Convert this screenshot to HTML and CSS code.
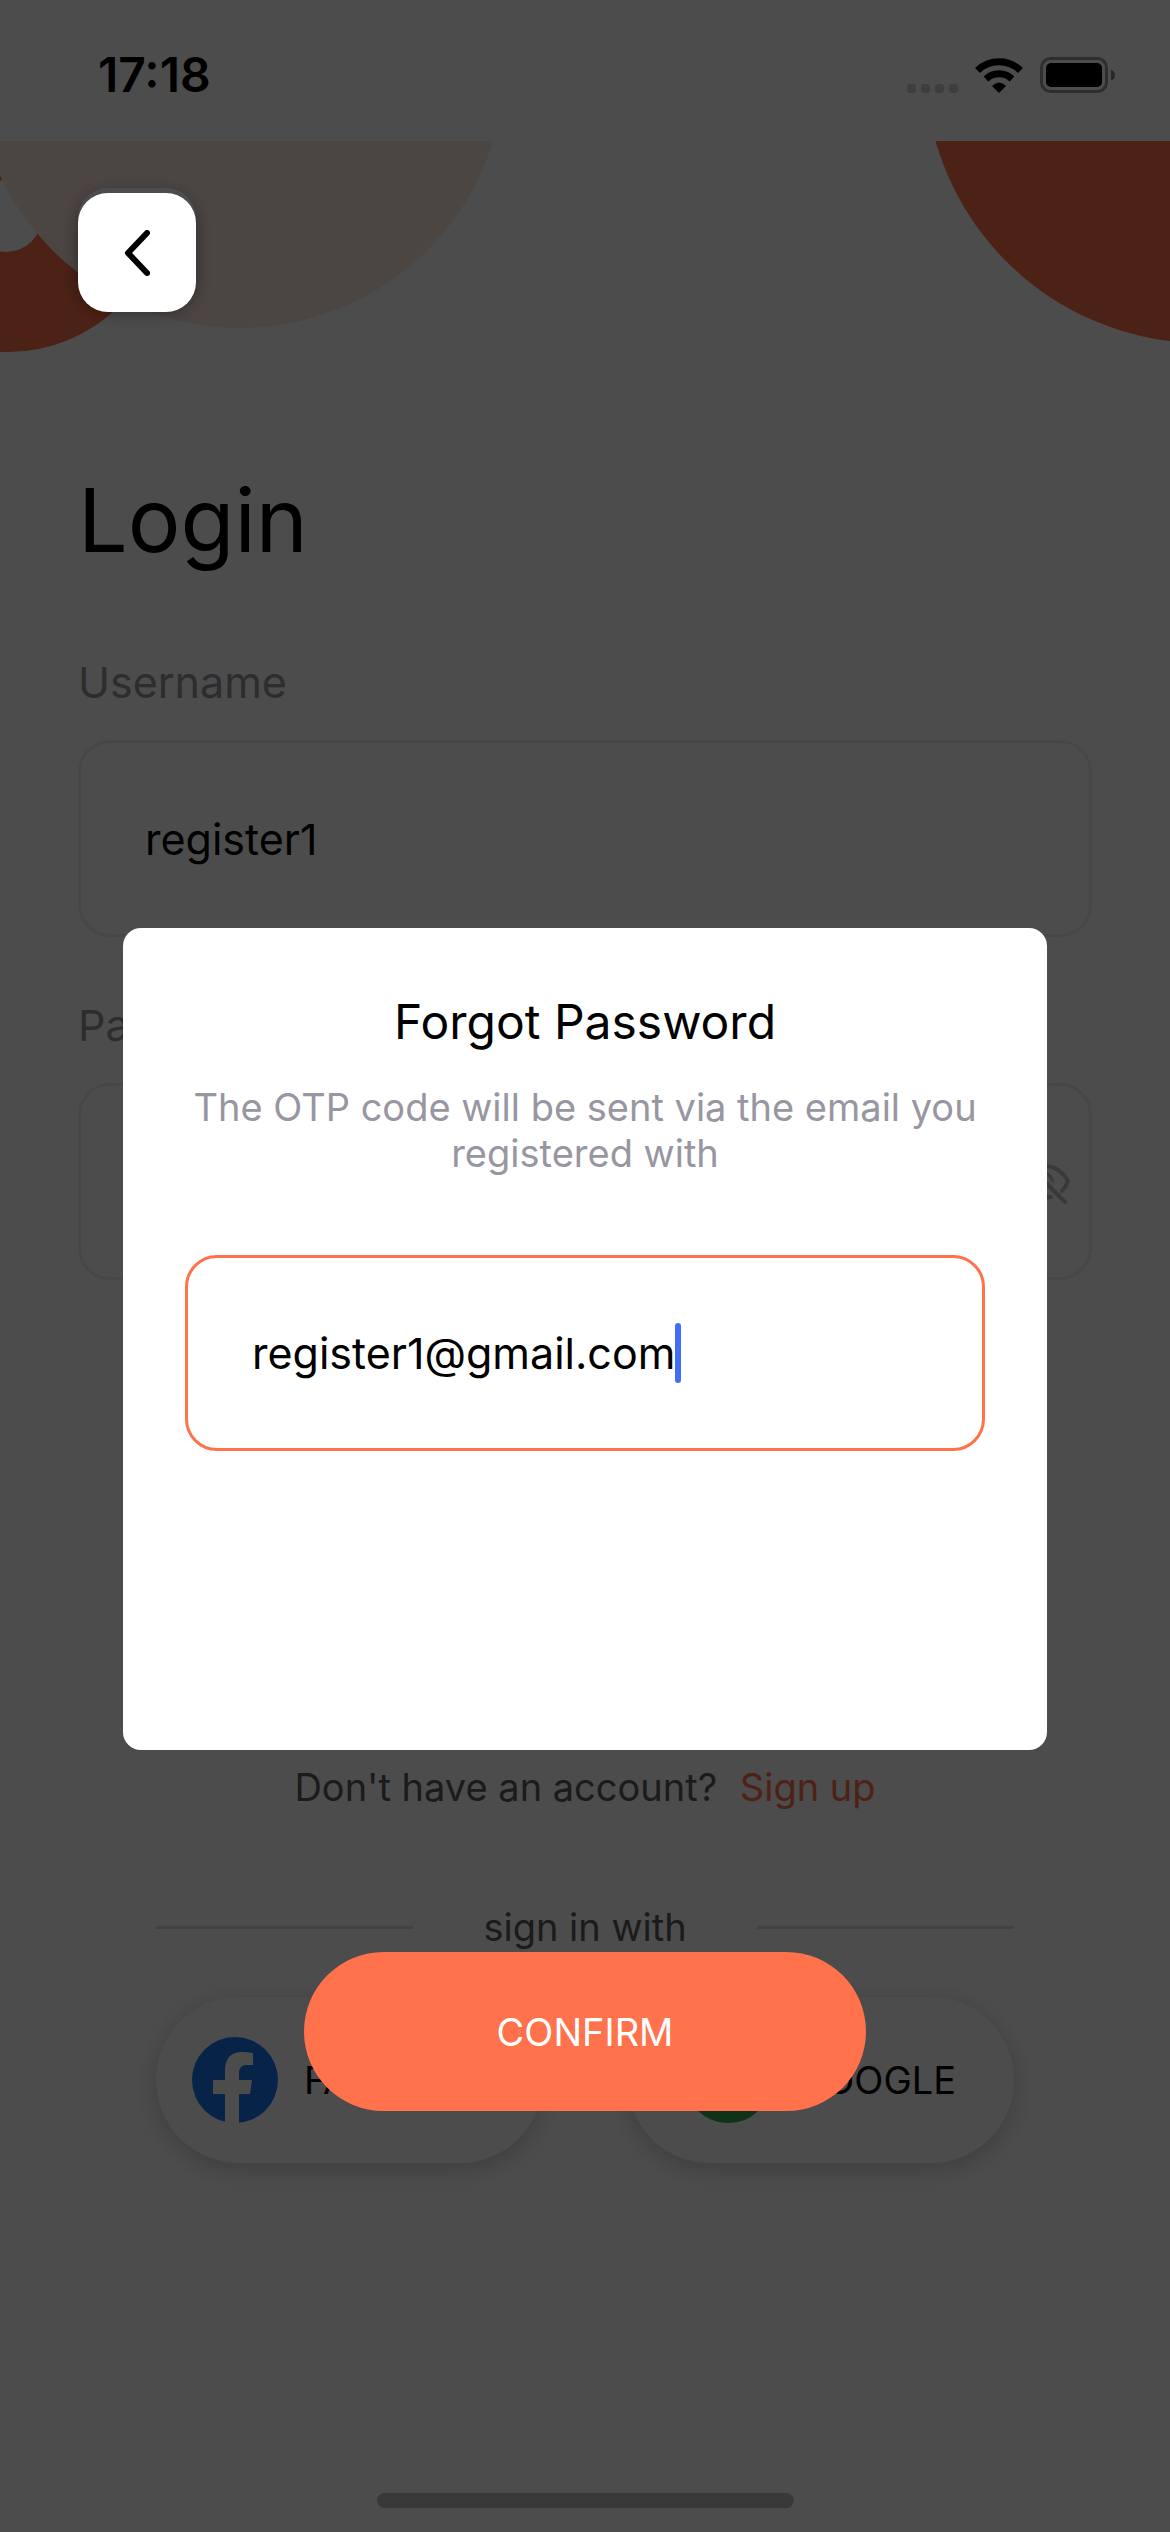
FILE: index.html
```html
<!DOCTYPE html>
<html lang="en">
<head>
<meta charset="utf-8">
<meta name="viewport" content="width=device-width, initial-scale=1">
<title>Login</title>
<link rel="stylesheet" href="styles.css">
</head>
<body>
<div class="screen">
  <header class="status">
    <time class="clock">17:18</time>
    <div class="status-icons">
      <span class="signal"><i></i><i></i><i></i><i></i></span>
      <svg class="wifi" viewBox="0 0 48 36" width="48" height="36" aria-hidden="true">
        <g fill="none" stroke="#000" stroke-width="7">
          <path d="M2.500 13.500A31 31 0 0 1 45.500 13.500"/>
          <path d="M11 22A19 19 0 0 1 37 22"/>
        </g>
        <path d="M17 29Q24 22 31 29L24 36Z"/>
      </svg>
      <svg class="battery" viewBox="0 0 76 36" width="76" height="36" aria-hidden="true">
        <rect x="1.500" y="1.500" width="65" height="33" rx="9" fill="none" stroke="#999" stroke-width="3"/>
        <rect x="6" y="6" width="56" height="24" rx="5"/>
        <path d="M71 12.500Q75 14 75 18T71 23.500Z" fill="#888"/>
      </svg>
    </div>
  </header>

  <main class="page">
    <svg class="deco deco-left" viewBox="0 0 520 220" width="520" height="220" aria-hidden="true">
      <circle cx="8" cy="53" r="158" fill="#ff724c"/>
      <circle cx="6" cy="75" r="36" fill="#fff"/>
      <circle cx="240" cy="-78" r="265" fill="#ffeae2"/>
    </svg>
    <svg class="deco deco-right" viewBox="0 0 240 220" width="240" height="220" aria-hidden="true">
      <circle cx="273" cy="-76" r="278" fill="#ff724c"/>
    </svg>
    <div class="back-base"></div>

    <h1 class="title">Login</h1>
    <form class="form">
      <label class="label" for="username">Username</label>
      <input class="input" id="username" type="text" value="register1">
      <label class="label" for="password">Password</label>
      <div class="password">
        <input class="input" id="password" type="password">
        <button class="eye" type="button" aria-label="Show password">
          <svg viewBox="0 0 52 44" width="52" height="44" fill="none" stroke="#c0c0c0" stroke-width="4" stroke-linecap="round" stroke-linejoin="round">
            <path d="M16 5Q22 3 27 4Q41 6 48 19Q46 25 42 29M10 10Q5 14 2 20Q11 36 26 35.500L31 35M7 2L45 40"/>
            <path d="M24 9Q34 11 34 22Z" fill="#c0c0c0" stroke="none"/>
          </svg>
        </button>
      </div>
    </form>

    <p class="signup">Don't have an account? <a class="signup-link" href="#signup">Sign up</a></p>
    <div class="divider"><span>sign in with</span></div>
    <div class="socials">
      <button class="social" type="button">
        <svg viewBox="0 0 86 86" width="86" height="86" aria-hidden="true">
          <circle cx="43" cy="43" r="43" fill="#1877f2"/>
          <path fill="#fff" d="M33 86V57H21V43H33V34Q33 15 50 15Q56 15 61 16V28H55Q47 28 47 36V43H60L58 57H47V86Z"/>
        </svg>
        <span>FACEBOOK</span>
      </button>
      <button class="social" type="button">
        <svg viewBox="0 0 48 48" width="86" height="86" aria-hidden="true">
          <path fill="#ea4335" d="M24 9.500c3.540 0 6.710 1.220 9.210 3.600l6.850-6.850C35.900 2.380 30.470 0 24 0 14.620 0 6.510 5.380 2.560 13.220l7.980 6.190C12.430 13.720 17.740 9.500 24 9.500z"/>
          <path fill="#4285f4" d="M46.980 24.550c0-1.570-.15-3.090-.38-4.550H24v9.020h12.940c-.58 2.960-2.260 5.480-4.780 7.180l7.730 6c4.510-4.180 7.090-10.360 7.090-17.650z"/>
          <path fill="#fbbc05" d="M10.530 28.590c-.48-1.450-.76-2.990-.76-4.590s.27-3.140.76-4.590l-7.980-6.190C.92 16.460 0 20.120 0 24s.92 7.540 2.560 10.780z"/>
          <path fill="#34a853" d="M24 48c6.480 0 11.930-2.130 15.890-5.810l-7.730-6c-2.150 1.450-4.920 2.300-8.160 2.300-6.260 0-11.570-4.220-13.470-9.910l-7.980 6.190C6.510 42.620 14.620 48 24 48z"/>
        </svg>
        <span>GOOGLE</span>
      </button>
    </div>
    <div class="home-bar"></div>
  </main>

  <div class="overlay">
    <button class="back" type="button" aria-label="Back">
      <svg viewBox="0 0 26 46" width="26" height="46" fill="none" stroke="#000" stroke-width="6" stroke-linecap="round" stroke-linejoin="round"><path d="M23 3L4 23L23 43"/></svg>
    </button>
    <section class="dialog" role="dialog" aria-labelledby="dialog-title">
      <h2 class="dialog-title" id="dialog-title">Forgot Password</h2>
      <p class="dialog-text">The OTP code will be sent via the email you registered with</p>
      <div class="email">
        <input class="email-input" type="email" aria-label="Email" value="register1@gmail.com">
        <span class="caret"></span>
      </div>
    </section>
    <button class="confirm" type="button">CONFIRM</button>
  </div>
</div>
</body>
</html>
```
FILE: styles.css
```css
* {
  box-sizing: border-box;
}

body {
  margin: 0;
  background: #fff;
  color: #000;
  font-family: Inter, "Liberation Sans", sans-serif;
  font-size: 38px;
  line-height: 48px;
}

button,
input {
  font: inherit;
  color: inherit;
}

button {
  border: 0;
  padding: 0;
}

h1,
h2,
p {
  margin: 0;
  font-weight: 400;
}

svg {
  display: block;
  flex: none;
}

.screen {
  position: relative;
  display: flex;
  flex-direction: column;
  min-height: 100vh;
}

.status {
  display: flex;
  align-items: center;
  justify-content: space-between;
  height: 141px;
  padding: 8px 54px 0 98px;
}

.clock {
  font-size: 48px;
  font-weight: 600;
}

.status-icons {
  display: flex;
  align-items: flex-end;
  gap: 17px;
}

.signal {
  display: flex;
  gap: 5px;
}

.signal i {
  width: 9px;
  height: 9px;
  border-radius: 3px;
  background: #d0d0d0;
}

.page {
  position: relative;
  flex: 1;
  display: flex;
  flex-direction: column;
  padding: 47px 78px 24px;
}

.deco {
  position: absolute;
  top: 0;
}

.deco-left {
  left: 0;
}

.deco-right {
  right: 0;
}

.back-base {
  position: relative;
  width: 118px;
  height: 118px;
  border-radius: 30px;
  background: #fff;
  box-shadow: 0 6px 18px rgba(0, 0, 0, 0.4);
}

.title {
  margin-top: 159px;
  font-size: 88px;
  line-height: 110px;
}

.form {
  display: flex;
  flex-direction: column;
  margin-top: 81px;
}

.label {
  margin-bottom: 32px;
  color: #9796a1;
  font-size: 43px;
  line-height: 52px;
}

.input {
  width: 100%;
  height: 197px;
  margin-bottom: 62px;
  padding: 0 64px;
  border: 3px solid #eee;
  border-radius: 32px;
  background: none;
  font-size: 43px;
}

.password {
  position: relative;
}

.eye {
  position: absolute;
  top: 79px;
  right: 20px;
  background: none;
}

.signup {
  margin-top: 421px;
  color: #5b5b5e;
  text-align: center;
}

.signup-link {
  margin-left: 12px;
  color: #ff724c;
  text-decoration: none;
}

.divider {
  display: grid;
  grid-template-columns: 1fr 344px 1fr;
  align-items: center;
  margin: 92px 78px 0;
  color: #5b5b5e;
  text-align: center;
}

.divider::before,
.divider::after {
  content: "";
  height: 3px;
  background: #dcdcdc;
}

.socials {
  display: grid;
  grid-template-columns: 1fr 1fr;
  gap: 84px;
  margin: 46px 78px 0;
}

.social {
  display: flex;
  align-items: center;
  justify-content: center;
  gap: 26px;
  height: 166px;
  border-radius: 83px;
  background: #fff;
  box-shadow: 0 6px 24px rgba(0, 0, 0, 0.2);
}

.home-bar {
  align-self: center;
  width: 417px;
  height: 15px;
  margin-top: auto;
  border-radius: 8px;
  background: #bebebe;
}

.overlay {
  position: absolute;
  inset: 0;
  display: flex;
  flex-direction: column;
  align-items: center;
  padding: 193px 78px 0;
  background: rgba(0, 0, 0, 0.7);
}

.back {
  display: grid;
  place-items: center;
  align-self: flex-start;
  width: 118px;
  height: 119px;
  border-radius: 30px;
  background: #fff;
}

.dialog {
  align-self: stretch;
  min-height: 822px;
  margin: 616px 45px 0;
  padding: 66px 62px;
  border-radius: 18px;
  background: #fff;
  text-align: center;
}

.dialog-title {
  font-size: 48px;
  line-height: 56px;
}

.dialog-text {
  margin-top: 34px;
  color: #9796a1;
  line-height: 46px;
}

.email {
  display: flex;
  align-items: center;
  height: 196px;
  margin-top: 79px;
  padding: 0 64px;
  border: 3px solid #ff724c;
  border-radius: 32px;
}

.email-input {
  field-sizing: content;
  height: 60px;
  padding: 0;
  border: 0;
  outline: 0;
  background: none;
  font-size: 43px;
  line-height: 60px;
}

.caret {
  width: 6px;
  height: 60px;
  border-radius: 3px;
  background: #426df5;
}

.confirm {
  width: 562px;
  height: 159px;
  margin-top: 202px;
  border-radius: 80px;
  background: #ff724c;
  color: #fff;
}
```
